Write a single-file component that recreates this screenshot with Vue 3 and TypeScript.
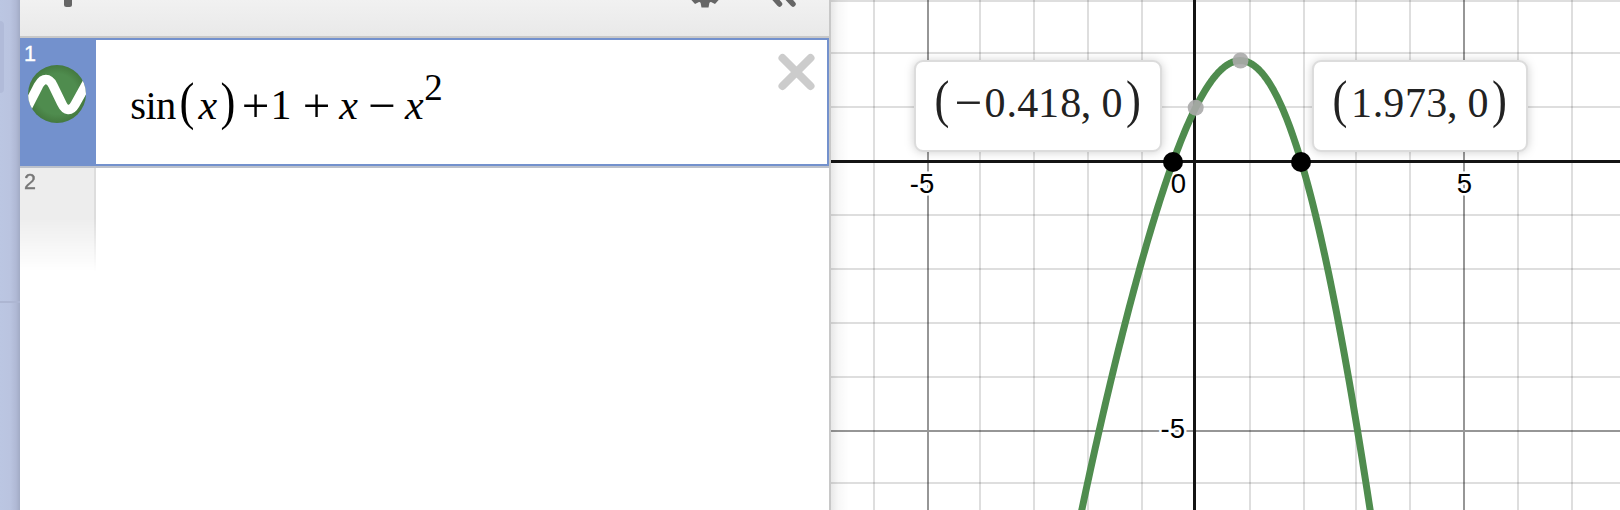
<script setup lang="ts">
interface Glyph { t: string; x: number; y?: number; s?: number; i?: boolean; w?: number }
interface Tip { x: number; w: number; glyphs: Glyph[] }

const LEFT = 831
const gridX = [874, 980, 1034, 1088, 1142, 1250, 1304, 1356, 1410, 1518, 1572]
const gridY = [1, 53, 107, 215, 269, 323, 377, 483]

const f = (x: number): number => Math.sin(x) + 1 + x - x * x
const px = (x: number): number => 1195.5 + x * 53.6
const py = (y: number): number => 161.7 - y * 53.8
const pts: string[] = []
for (let x = -2.5; x <= 3.6; x += 0.03) pts.push(`${px(x).toFixed(2)},${py(f(x)).toFixed(2)}`)
const curve = pts.join(' ')

const formula: Glyph[] = [
  { t: 'sin', x: 153.3, s: 40.5, w: 46 },
  { t: 'x', x: 207.8, s: 42, i: true },
  { t: '+', x: 255.5, s: 49, y: 121.5 },
  { t: '1', x: 281, s: 42 },
  { t: '+', x: 316.5, s: 49, y: 121.5 },
  { t: 'x', x: 348.5, s: 42, i: true },
  { t: '−', x: 382, s: 49, y: 121.5 },
  { t: 'x', x: 414.3, s: 42, i: true },
  { t: '2', x: 433.5, y: 100, s: 37 },
]

const tips: Tip[] = [
  {
    x: 914, w: 248,
    glyphs: [
      { t: '−', x: 968.5, s: 49, y: 118.5 }, { t: '0', x: 995 }, { t: '.', x: 1011.7 }, { t: '4', x: 1027.7 },
      { t: '1', x: 1048.5 }, { t: '8', x: 1070.7 }, { t: ',', x: 1086 }, { t: '0', x: 1112 },
    ],
  },
  {
    x: 1312, w: 216,
    glyphs: [
      { t: '1', x: 1361.5 }, { t: '.', x: 1378 }, { t: '9', x: 1393.7 }, { t: '7', x: 1415.5 },
      { t: '3', x: 1436.7 }, { t: ',', x: 1452.3 }, { t: '0', x: 1478 },
    ],
  },
]
</script>

<template>
  <div class="page">
    <aside class="backdrop"><div class="tab"></div><div class="rule"></div></aside>
    <section class="panel">
      <header class="toolbar">
        <svg width="808" height="36" viewBox="20 0 808 36">
          <rect x="64" y="-12" width="8" height="19" rx="2.5" fill="#666" />
          <g fill="#666">
            <circle cx="705" cy="-8.500" r="12" />
            <path d="M700 0H710L708.500 7.500H701.500Z" />
            <path d="M690.500-1L695 4L701 1L699-5Z" />
            <path d="M719.500-1L715 4L709 1L711-5Z" />
          </g>
          <g fill="none" stroke="#666" stroke-width="5.500" stroke-linecap="round">
            <path d="M769-8L779.500 4M782-8L793 4" />
          </g>
        </svg>
      </header>
      <div class="row active">
        <div class="gutter">
          <span class="num">1</span>
          <svg class="icon" width="58" height="58" viewBox="0 0 58 58">
            <defs>
              <radialGradient id="disc"><stop offset="0.7" stop-color="#4f8c4e" /><stop offset="1" stop-color="#44793f" /></radialGradient>
              <clipPath id="clip"><circle cx="29" cy="29" r="29" /></clipPath>
            </defs>
            <circle cx="29" cy="29" r="29" fill="url(#disc)" />
            <path clip-path="url(#clip)" d="M-1 43L10.500 20.500C15 12.500 21 12.500 25 20.500L33.500 38C37.500 46.500 43 46.500 47 39.500L60 16" fill="none" stroke="#fff" stroke-width="9.500" />
          </svg>
        </div>
        <div class="expr">
          <svg width="730" height="124" viewBox="96 40 730 124">
            <g class="math" fill="#000">
              <text v-for="(g, k) in formula" :key="k" :x="g.x" :y="g.y ?? 119.3" :font-size="g.s" :font-style="g.i ? 'italic' : 'normal'" :textLength="g.w">{{ g.t }}</text>
              <text transform="translate(187 118.500) scale(.86 1)" font-size="52">(</text>
              <text transform="translate(228 118.500) scale(.86 1)" font-size="52">)</text>
            </g>
            <path d="M782.500 58L810.500 86M810.500 58L782.500 86" stroke="#ccc" stroke-width="8" stroke-linecap="round" />
          </svg>
        </div>
      </div>
      <div class="row next"><div class="gutter"><span class="num">2</span></div></div>
    </section>
    <main class="graph">
      <svg width="789" height="510" viewBox="831 0 789 510">
        <defs>
          <linearGradient id="edge"><stop offset="0" stop-color="#000" stop-opacity=".09" /><stop offset=".4" stop-color="#000" stop-opacity=".03" /><stop offset="1" stop-color="#000" stop-opacity="0" /></linearGradient>
          <filter id="soft" x="-20%" y="-30%" width="140%" height="160%"><feGaussianBlur stdDeviation="5" /></filter>
        </defs>
        <g stroke="#000" stroke-width="2">
          <g stroke-opacity=".13">
            <path v-for="x in gridX" :key="'v' + x" :d="`M${x} 0V510`" />
            <path v-for="y in gridY" :key="'h' + y" :d="`M${LEFT} ${y}H1620`" />
          </g>
          <path d="M928 0V510M1464 0V510M831 431H1620" stroke-opacity=".41" />
        </g>
        <path d="M1194.500 0V510M831 161.500H1620" stroke="#141414" stroke-width="3" />
        <g class="labels">
          <text x="922" y="192.700">-5</text>
          <text x="1464.500" y="192.700">5</text>
          <text x="1172.800" y="438">-5</text>
        </g>
        <polyline :points="curve" fill="none" stroke="#4f8c4e" stroke-width="7" stroke-linejoin="round" />
        <g class="labels origin"><text x="1178.300" y="192.700">0</text></g>
        <circle cx="1195.700" cy="107.700" r="8" fill="#aaa" fill-opacity=".9" />
        <circle cx="1240.500" cy="60.500" r="8" fill="#aaa" fill-opacity=".9" />
        <circle cx="1173" cy="162" r="10" />
        <circle cx="1301" cy="162" r="10" />
        <rect x="831" y="0" width="18" height="510" fill="url(#edge)" />
        <g v-for="tip in tips" :key="tip.x">
          <rect :x="tip.x" y="61" :width="tip.w" height="91" rx="9" fill="#000" fill-opacity=".2" filter="url(#soft)" />
          <rect :x="tip.x + 1" y="61" :width="tip.w - 2" height="90" rx="8" fill="#fff" stroke="#dcdcdc" stroke-width="2" />
          <g class="math" fill="#222">
            <text :transform="`translate(${tip.x + 28} 116.5) scale(.86 1)`" font-size="52">(</text>
            <text v-for="(g, k) in tip.glyphs" :key="k" :x="g.x" :y="g.y ?? 116.5" :font-size="g.s ?? 42">{{ g.t }}</text>
            <text :transform="`translate(${tip.x + tip.w - 28.5} 116.5) scale(.86 1)`" font-size="52">)</text>
          </g>
        </g>
      </svg>
    </main>
  </div>
</template>

<style>
body { margin: 0; overflow: hidden; }
</style>
<style scoped>
.page { display: flex; width: 1620px; height: 510px; overflow: hidden; background: #fff; font-family: "Liberation Sans", Arial, sans-serif; }
svg { display: block; }
.backdrop { width: 20px; height: 510px; display: flex; flex-direction: column; background: linear-gradient(90deg, #bbc6e2 0, #bac4e0 50%, #b0b9d5 80%, #a2abc5 100%); }
.tab { width: 4px; height: 72px; margin-top: 21px; border-radius: 0 6px 6px 0; background: #b1bbd9; }
.rule { height: 2px; margin-top: 208px; background: #adb6d2; }
.panel { box-sizing: border-box; width: 811px; height: 510px; border-right: 2px solid #c8c8c8; background: #fff; }
.toolbar { height: 36px; border-bottom: 2px solid #c8c8c8; background: linear-gradient(#f1f1f1, #e9e9e9); overflow: hidden; }
.row { display: flex; }
.active { box-sizing: border-box; height: 128px; border: 2px solid #7391cd; border-left: 0; }
.active .gutter { width: 76px; height: 126px; background: #7391cd; }
.gutter { position: relative; box-sizing: border-box; }
.num { display: block; padding-left: 4px; font-size: 21.5px; line-height: 24px; }
.active .num { padding-top: 2px; color: #fff; -webkit-text-stroke: 0.4px #fff; }
.icon { margin: -1px 0 0 8px; }
.expr { width: 733px; }
.next { border-top: 2px solid #bcc1cb; }
.next .gutter { width: 76px; height: 104px; border-right: 2px solid #ddd; background: #ededed; -webkit-mask-image: linear-gradient(#000 48%, transparent); mask-image: linear-gradient(#000 48%, transparent); }
.next .num { padding-top: 2px; color: #777; -webkit-text-stroke: 0.4px #777; }
.graph { width: 789px; height: 510px; overflow: hidden; }
.math { font-family: "Liberation Serif", "Times New Roman", serif; text-anchor: middle; }
.labels { font-size: 27.5px; text-anchor: middle; fill: #000; stroke: #fff; stroke-width: 5px; paint-order: stroke; stroke-linejoin: round; }
.origin { stroke-width: 2.5px; }
</style>
